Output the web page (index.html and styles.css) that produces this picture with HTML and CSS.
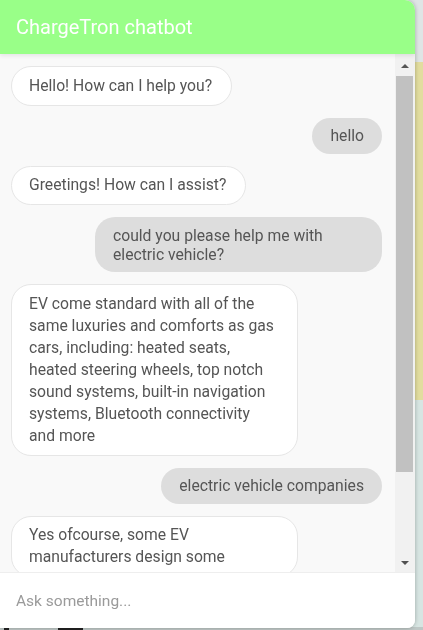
FILE: index.html
```html
<!DOCTYPE html>
<html lang="en">
<head>
<meta charset="utf-8">
<title>ChargeTron chatbot</title>
<link rel="stylesheet" href="styles.css">
</head>
<body>
<div class="page">
  <div class="page-top"></div>
  <div class="page-band"></div>
  <div class="page-rest">
    <div class="page-foot">
      <span class="mark mark-a"></span>
      <span class="mark mark-b"></span>
    </div>
  </div>
</div>

<section class="chat">
  <header class="chat-header">ChargeTron chatbot</header>
  <div class="chat-body">
    <div class="messages">
      <div class="msg bot">Hello! How can I help you?</div>
      <div class="msg user">hello</div>
      <div class="msg bot">Greetings! How can I assist?</div>
      <div class="msg user">could you please help me with electric vehicle?</div>
      <div class="msg bot">EV come standard with all of the same luxuries and comforts as gas cars, including: heated seats, heated steering wheels, top notch sound systems, built-in navigation systems, Bluetooth connectivity and more</div>
      <div class="msg user">electric vehicle companies</div>
      <div class="msg bot">Yes ofcourse, some EV manufacturers design some</div>
    </div>
    <div class="scrollbar">
      <div class="sb-btn"><span class="tri tri-up"></span></div>
      <div class="sb-track"><div class="sb-thumb"></div></div>
      <div class="sb-btn"><span class="tri tri-down"></span></div>
    </div>
  </div>
  <div class="chat-input">
    <input class="input" type="text" placeholder="Ask something...">
  </div>
</section>
</body>
</html>
```

FILE: styles.css
```css
* { box-sizing: border-box; }

html, body {
  margin: 0;
  padding: 0;
  height: 100%;
}

body {
  font-family: Roboto, "Liberation Sans", sans-serif;
  background: #d7e5e2;
  overflow: hidden;
}

.page {
  display: flex;
  flex-direction: column;
  height: 100%;
}

.page-top {
  height: 62px;
  background: #dfe5e5;
}

.page-band {
  height: 338px;
  background: #e2dd9f;
}

.page-rest {
  flex: 1;
  display: flex;
  flex-direction: column;
  justify-content: flex-end;
}

.page-foot {
  display: flex;
  height: 3px;
  background: #bfc8c6;
}

.mark {
  display: block;
  height: 3px;
  background: #222;
}

.mark-a { width: 5px; margin-left: 4px; }
.mark-b { width: 25px; margin-left: 49px; }

/* chat widget floats over the page */
.chat {
  position: fixed;
  left: 0;
  top: 0;
  width: 415px;
  height: 628px;
  display: flex;
  flex-direction: column;
  background: #f9f9f9;
  border-radius: 0 10px 8px 0;
  box-shadow: 0 0 4px rgba(0, 0, 0, 0.28);
  overflow: hidden;
}

.chat-header {
  flex: none;
  height: 54px;
  display: flex;
  align-items: center;
  padding-left: 16px;
  background: #99ff88;
  color: #ffffff;
  font-size: 20px;
  box-shadow: 0 2px 4px rgba(0, 0, 0, 0.08);
  position: relative;
  z-index: 1;
}

.chat-body {
  flex: 1;
  display: flex;
  min-height: 0;
}

.messages {
  flex: 1;
  display: flex;
  flex-direction: column;
  gap: 12px;
  padding: 12px 13px 0 11px;
  overflow: hidden;
}

.msg {
  flex: none;
  max-width: 287px;
  font-size: 15.7px;
  color: #555555;
  border-radius: 20px;
}

.bot {
  align-self: flex-start;
  background: #ffffff;
  border: 1px solid #e6e6e6;
  padding: 7.5px 18.5px 8px 17px;
  line-height: 22px;
}

.user {
  align-self: flex-end;
  background: #dddddd;
  padding: 8.5px 18px;
  line-height: 19px;
}

.scrollbar {
  flex: none;
  width: 20px;
  display: flex;
  flex-direction: column;
  background: #f1f1f1;
}

.sb-btn {
  flex: none;
  height: 20px;
  display: flex;
  align-items: center;
  justify-content: center;
  padding-right: 1px;
}

.tri {
  width: 0;
  height: 0;
  border-left: 4px solid transparent;
  border-right: 4px solid transparent;
}

.tri-up { border-bottom: 4px solid #555555; margin-top: 4px; }
.tri-down { border-top: 4px solid #505050; margin-top: 2px; }

.sb-track {
  flex: 1;
  padding: 2px 2px 0 1px;
}

.sb-thumb {
  height: 396px;
  background: #c1c1c1;
}

.chat-input {
  flex: none;
  height: 56px;
  background: #ffffff;
  border-top: 1px solid #eeeeee;
  display: flex;
}

.input {
  flex: 1;
  border: none;
  outline: none;
  background: transparent;
  padding: 0 16px;
  font-family: Roboto, "Liberation Sans", sans-serif;
  font-size: 15.5px;
  color: #555555;
}

.input::placeholder {
  color: #9a9a9a;
}
```
